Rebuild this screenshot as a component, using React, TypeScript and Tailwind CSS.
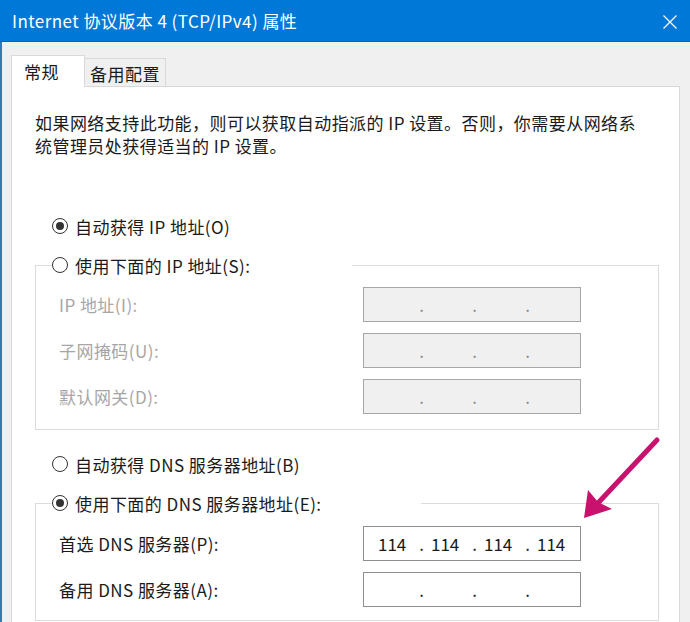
import React from "react";

function Radio({ checked }: { checked?: boolean }) {
  return (
    <span className="w-[16px] h-[16px] rounded-full border border-[#333333] flex items-center justify-center shrink-0">
      {checked && <span className="w-[8px] h-[8px] rounded-full bg-[#333333]" />}
    </span>
  );
}

function IpBox({ value, disabled }: { value?: string[]; disabled?: boolean }) {
  const parts = value ?? ["", "", "", ""];
  return (
    <div
      className={
        disabled
          ? "w-[218px] h-[35px] border border-[#a8a8a8] bg-[#f0f0f0] flex items-center pl-[14px] text-[#8a8a8a] tracking-normal"
          : "w-[218px] h-[35px] border border-[#8f8f8f] bg-white flex items-center pl-[14px] text-[#1a1a1a] tracking-normal"
      }
    >
      {parts.map((p, i) => (
        <React.Fragment key={i}>
          <span className="w-[27px] text-center">{p}</span>
          {i < 3 && <span className="w-[26px] text-right pr-[7px]">.</span>}
        </React.Fragment>
      ))}
    </div>
  );
}

function FieldRow({ label, disabled, value }: { label: string; disabled?: boolean; value?: string[] }) {
  return (
    <div className="flex items-center h-[35px] pl-[23px]">
      <span className={disabled ? "w-[304px] text-[#a6a6a6]" : "w-[304px] text-[#1a1a1a]"}>{label}</span>
      <IpBox disabled={disabled} value={value} />
    </div>
  );
}

export default function App() {
  return (
    <div className="relative w-[690px] h-[622px] overflow-hidden bg-[#f0f0f0] flex flex-col font-['Noto_Sans_CJK_SC',sans-serif] text-[17px] leading-[23px] tracking-[0.45px] text-[#1a1a1a]">
      {/* title bar */}
      <div className="h-[42px] shrink-0 bg-[#0078d7] border-b border-[#0a65b5] flex items-center justify-between pl-[12px] pr-[12px] text-white">
        <span>Internet 协议版本 4 (TCP/IPv4) 属性</span>
        <svg width="16" height="16" viewBox="0 0 16 16" className="mt-[2px]">
          <path d="M1.5 1.5 L14.5 14.5 M14.5 1.5 L1.5 14.5" stroke="#ffffff" strokeWidth="1.2" fill="none" />
        </svg>
      </div>

      <div className="flex-1 border-l-2 border-[#2d7db3] pl-[9px] pr-[10px]">
        {/* tabs */}
        <div className="flex items-end pt-[13px]">
          <div className="relative z-10 w-[74px] h-[32px] -mb-px bg-white border border-b-0 border-[#d9d9d9] flex items-center pl-[12px]">
            常规
          </div>
          <div className="w-[81px] h-[28px] bg-[#f0f0f0] border border-l-0 border-b-0 border-[#d9d9d9] flex items-center justify-center pt-[1px]">
            备用配置
          </div>
        </div>

        {/* panel */}
        <div className="h-[600px] bg-white border border-[#d9d9d9]">
          <p className="pt-[24px] pl-[23px]">
            如果网络支持此功能，则可以获取自动指派的 IP 设置。否则，你需要从网络系
            <br />
            统管理员处获得适当的 IP 设置。
          </p>

          <div className="pl-[23px] pr-[20px]">
            <div className="mt-[57px] h-[24px] flex items-center pl-[17px]">
              <Radio checked />
              <span className="ml-[7px]">自动获得 IP 地址(O)</span>
            </div>

            <fieldset className="mt-[15px] border border-[#dcdcdc] pb-[15px]">
              <legend className="ml-[16px] w-[300px] h-[24px] flex items-center">
                <Radio />
                <span className="ml-[7px]">使用下面的 IP 地址(S):</span>
              </legend>
              <div className="mt-[10px] flex flex-col gap-[11px]">
                <FieldRow label="IP 地址(I):" disabled />
                <FieldRow label="子网掩码(U):" disabled />
                <FieldRow label="默认网关(D):" disabled />
              </div>
            </fieldset>

            <div className="mt-[22px] h-[24px] flex items-center pl-[17px]">
              <Radio />
              <span className="ml-[7px]">自动获得 DNS 服务器地址(B)</span>
            </div>

            <fieldset className="mt-[15px] border border-[#dcdcdc] pb-[13px]">
              <legend className="ml-[16px] w-[369px] h-[24px] flex items-center">
                <Radio checked />
                <span className="ml-[7px]">使用下面的 DNS 服务器地址(E):</span>
              </legend>
              <div className="mt-[11px] flex flex-col gap-[11px]">
                <FieldRow label="首选 DNS 服务器(P):" value={["114", "114", "114", "114"]} />
                <FieldRow label="备用 DNS 服务器(A):" />
              </div>
            </fieldset>
          </div>
        </div>
      </div>

      {/* annotation arrow */}
      <svg className="absolute left-0 top-0 pointer-events-none" width="690" height="622">
        <line x1="657" y1="440" x2="598" y2="503" stroke="#c8126e" strokeWidth="5" strokeLinecap="round" />
        <polygon points="584,518 588,490 598,502 612,509" fill="#c8126e" />
      </svg>
    </div>
  );
}
